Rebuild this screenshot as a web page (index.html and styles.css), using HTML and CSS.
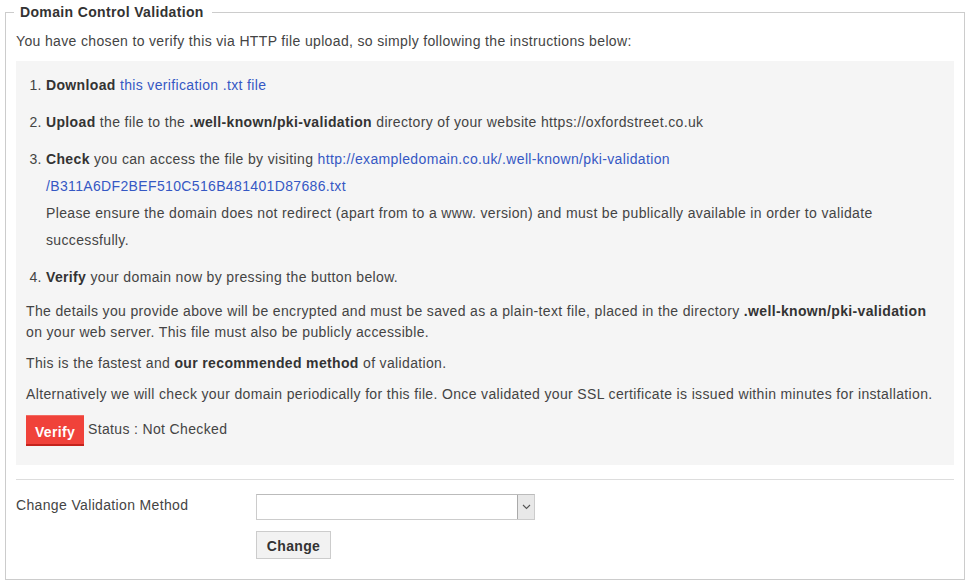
FILE: index.html
```html
<!DOCTYPE html>
<html>
<head>
<meta charset="utf-8">
<link rel="stylesheet" href="styles.css">
</head>
<body>
<fieldset class="dcv">
  <legend class="dcv-legend">Domain Control Validation</legend>
  <p class="intro">You have chosen to verify this via HTTP file upload, so simply following the instructions below:</p>
  <div class="panel">
    <ol class="steps">
      <li><b>Download</b> <a href="#">this verification .txt file</a></li>
      <li><b>Upload</b> the file to the <b>.well-known/pki-validation</b> directory of your website https://oxfordstreet.co.uk</li>
      <li><b>Check</b> you can access the file by visiting <a href="#">http://exampledomain.co.uk/.well-known/pki-validation<br>/B311A6DF2BEF510C516B481401D87686.txt</a>
        <div>Please ensure the domain does not redirect (apart from to a www. version) and must be publically available in order to validate successfully.</div>
      </li>
      <li><b>Verify</b> your domain now by pressing the button below.</li>
    </ol>
    <p class="note">The details you provide above will be encrypted and must be saved as a plain-text file, placed in the directory <b>.well-known/pki-validation</b> on your web server. This file must also be publicly accessible.</p>
    <p class="note">This is the fastest and <b>our recommended method</b> of validation.</p>
    <p class="note">Alternatively we will check your domain periodically for this file. Once validated your SSL certificate is issued within minutes for installation.</p>
    <div class="verify-row">
      <button class="btn-verify" type="button">Verify</button>
      <span class="status">Status : Not Checked</span>
    </div>
  </div>
  <hr class="divider">
  <div class="form-row">
    <label class="form-label">Change Validation Method</label>
    <div class="form-controls">
      <div class="select-wrap">
        <select class="select"><option></option></select>
        <span class="select-arrow"><svg width="9" height="6" viewBox="0 0 9 6"><path d="M1 1 L4.5 4.5 L8 1" fill="none" stroke="#555" stroke-width="1.1"/></svg></span>
      </div>
      <button class="btn-change" type="button">Change</button>
    </div>
  </div>
</fieldset>
</body>
</html>
```
FILE: styles.css
```css
html, body {
  margin: 0;
  padding: 0;
  background: #fff;
}
body {
  font-family: "Liberation Sans", Arial, sans-serif;
  font-size: 14px;
  color: #444;
  letter-spacing: 0.35px;
}
.dcv {
  margin: 2px 9px 0 5px;
  padding: 0 10px 20px 10px;
  border: 1px solid #ccc;
  min-width: 0;
}
.dcv-legend {
  font-weight: bold;
  line-height: 20px;
  padding: 0 8px 0 6px;
  margin-left: -2px;
  color: #333;
}
.intro {
  margin: 9px 0 10px;
  line-height: 20px;
}
.panel {
  background: #f5f5f5;
  padding: 11px 10px 19px 10px;
}
.steps {
  margin: 0;
  padding-left: 20px;
  line-height: 27px;
}
.steps li + li {
  margin-top: 10px;
}
a {
  color: #3558c4;
  text-decoration: none;
}
b {
  font-weight: bold;
  color: #333;
}
.note {
  margin: 10px 0 0;
  line-height: 21px;
}
.verify-row {
  margin-top: 10px;
  display: flex;
  align-items: center;
  gap: 4px;
}
.btn-verify {
  font-family: inherit;
  font-size: 14px;
  font-weight: bold;
  letter-spacing: 0.35px;
  color: #fff;
  background: #f0423a;
  border: 0;
  border-top: 1px solid #f26a62;
  border-bottom: 2px solid #c4231c;
  width: 58px;
  height: 31px;
  padding: 3px 0 0;
  margin: 0;
}
.status {
  position: relative;
  top: -2px;
}
.divider {
  border: 0;
  border-top: 1px solid #ddd;
  margin: 14px 0 14px;
  height: 0;
}
.form-row {
  display: grid;
  grid-template-columns: 240px 1fr;
}
.form-label {
  line-height: 20px;
  padding-top: 1px;
}
.form-controls {
  display: flex;
  flex-direction: column;
  align-items: flex-start;
  gap: 11px;
}
.select-wrap {
  position: relative;
  width: 279px;
  height: 26px;
}
.select {
  appearance: none;
  -webkit-appearance: none;
  width: 100%;
  height: 100%;
  box-sizing: border-box;
  border: 1px solid #ccc;
  border-top-color: #bbb;
  background: #fff;
  margin: 0;
  font-family: inherit;
  font-size: 14px;
}
.select-arrow {
  position: absolute;
  right: 1px;
  top: 1px;
  width: 17px;
  height: 24px;
  background: #e8e8e8;
  border-left: 1px solid #aaa;
  box-sizing: border-box;
  display: flex;
  align-items: center;
  justify-content: center;
}
.btn-change {
  font-family: inherit;
  font-size: 14px;
  font-weight: bold;
  letter-spacing: 0.35px;
  color: #333;
  background: #f2f2f2;
  border: 1px solid #ccc;
  width: 75px;
  height: 28px;
  padding: 1px 0 0;
  margin: 0;
}
```
